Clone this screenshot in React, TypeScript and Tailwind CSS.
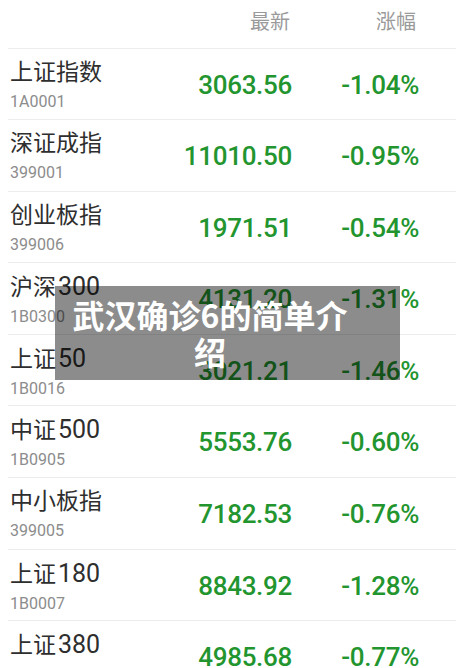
import React from "react";

const rows = [
  { cn: "上证指数", num: "", code: "1A0001", value: "3063.56", pct: "-1.04%", h: 71 },
  { cn: "深证成指", num: "", code: "399001", value: "11010.50", pct: "-0.95%", h: 72 },
  { cn: "创业板指", num: "", code: "399006", value: "1971.51", pct: "-0.54%", h: 71 },
  { cn: "沪深", num: "300", code: "1B0300", value: "4131.20", pct: "-1.31%", h: 72 },
  { cn: "上证", num: "50", code: "1B0016", value: "3021.21", pct: "-1.46%", h: 71 },
  { cn: "中证", num: "500", code: "1B0905", value: "5553.76", pct: "-0.60%", h: 72 },
  { cn: "中小板指", num: "", code: "399005", value: "7182.53", pct: "-0.76%", h: 72 },
  { cn: "上证", num: "180", code: "1B0007", value: "8843.92", pct: "-1.28%", h: 71 },
  { cn: "上证", num: "380", code: "", value: "4985.68", pct: "-0.77%", h: 72 },
];

const font = { fontFamily: "Roboto, 'Noto Sans CJK SC', sans-serif" };

export default function App() {
  return (
    <div
      className="relative w-[456px] h-[668px] overflow-hidden bg-white"
      style={font}
    >
      <div className="flex h-[48px] pr-[37px] text-[20px] leading-[24px] text-[#9a9a9a] font-['Noto_Sans_CJK_SC',sans-serif]">
        <div className="flex-1" />
        <div className="w-[127px] text-right pt-[9px] pr-[2px]">最新</div>
        <div className="w-[127px] text-right pt-[9px] pr-[3px]">涨幅</div>
      </div>
      <div className="ml-[8px]">
        {rows.map((r) => (
          <div
            key={r.value}
            className="flex border-t border-[#ececec] pr-[37px]"
            style={{ height: r.h }}
          >
            <div className="flex-1 pl-[2px] pt-[9px]">
              <div className="text-[23px] leading-[30px] text-[#2e2e2e] whitespace-nowrap">
                {r.cn}
                {r.num && (
                  <span className="ml-[2px] text-[25px]">{r.num}</span>
                )}
              </div>
              <div className="mt-[4px] h-[20px] text-[16px] leading-[20px] text-[#8c8c8c]">
                {r.code}
              </div>
            </div>
            <div className="w-[127px] pt-[21px] text-right text-[26px] leading-[30px] font-medium text-[#23952f] tracking-[-0.3px]">
              {r.value}
            </div>
            <div className="w-[127px] pt-[21px] text-right text-[26px] leading-[30px] font-medium text-[#23952f] tracking-[-0.3px]">
              {r.pct}
            </div>
          </div>
        ))}
      </div>
      <div className="absolute left-[55px] top-[286px] w-[345px] h-[94px] bg-black/45">
        <div className="ml-[15px] w-[280px] pt-[10px] text-center text-[32px] leading-[37px] font-bold text-white font-['Noto_Sans_CJK_SC',sans-serif]">
          武汉确诊6的简单介绍
        </div>
      </div>
    </div>
  );
}
